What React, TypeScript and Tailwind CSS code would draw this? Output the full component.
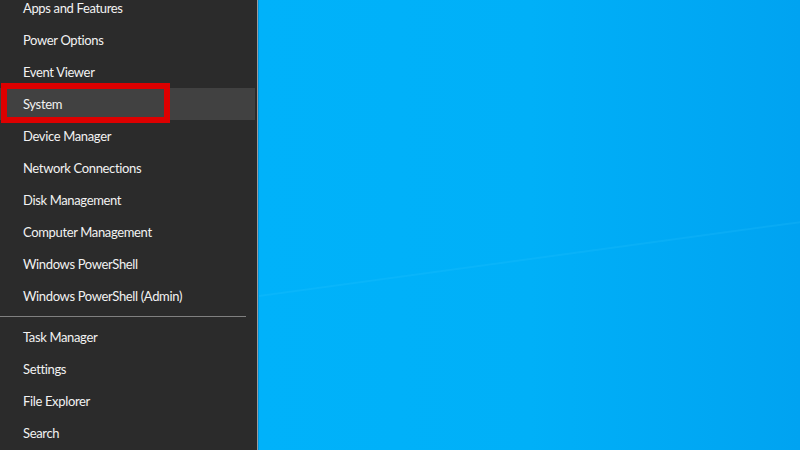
import React from "react";

const top = [
  "Apps and Features",
  "Power Options",
  "Event Viewer",
  "System",
  "Device Manager",
  "Network Connections",
  "Disk Management",
  "Computer Management",
  "Windows PowerShell",
  "Windows PowerShell (Admin)",
];
const bottom = ["Task Manager", "Settings", "File Explorer", "Search"];

function Row({ label, active }: { label: string; active?: boolean }) {
  return (
    <div
      className={
        "relative h-8 flex items-center pl-[23px] pt-[2px] text-[13px] tracking-[-0.35px] text-[#f2f2f2] " +
        (active ? "bg-[#414141]" : "")
      }
    >
      <span>{label}</span>
      {active && (
        <div className="absolute left-[1px] top-[-5px] w-[169px] h-[40px] border-[6px] border-[#dd0000]" />
      )}
    </div>
  );
}

export default function App() {
  return (
    <div
      className="w-[800px] h-[450px] overflow-hidden flex bg-[#2b2b2b]"
      style={{ fontFamily: "'Segoe UI', Lato, 'Noto Sans', sans-serif" }}
    >
      <div className="w-[257px] h-full flex flex-col bg-[#2b2b2b] shrink-0">
        <div className="flex flex-col mt-[-8px] pr-[2px]">
          {top.map((t) => (
            <Row key={t} label={t} active={t === "System"} />
          ))}
        </div>
        <div className="h-px bg-[#808080] w-[246px] mt-[4px] mb-[4px]" />
        <div className="flex flex-col pr-[2px]">
          {bottom.map((t) => (
            <Row key={t} label={t} />
          ))}
        </div>
      </div>
      <div className="w-px h-full bg-[#9a9a9a] shrink-0" />
      <div className="relative flex-1 h-full bg-gradient-to-r from-[#00b2fa] via-[#00b0f8] to-[#00a3f1] border-l border-[#0096dc]">
        <svg className="absolute inset-0" width="542" height="450" viewBox="0 0 542 450">
          <path d="M0 296 Q 250 262 542 222" stroke="#33c8ff" strokeOpacity="0.18" strokeWidth="2" fill="none" />
        </svg>
      </div>
    </div>
  );
}
